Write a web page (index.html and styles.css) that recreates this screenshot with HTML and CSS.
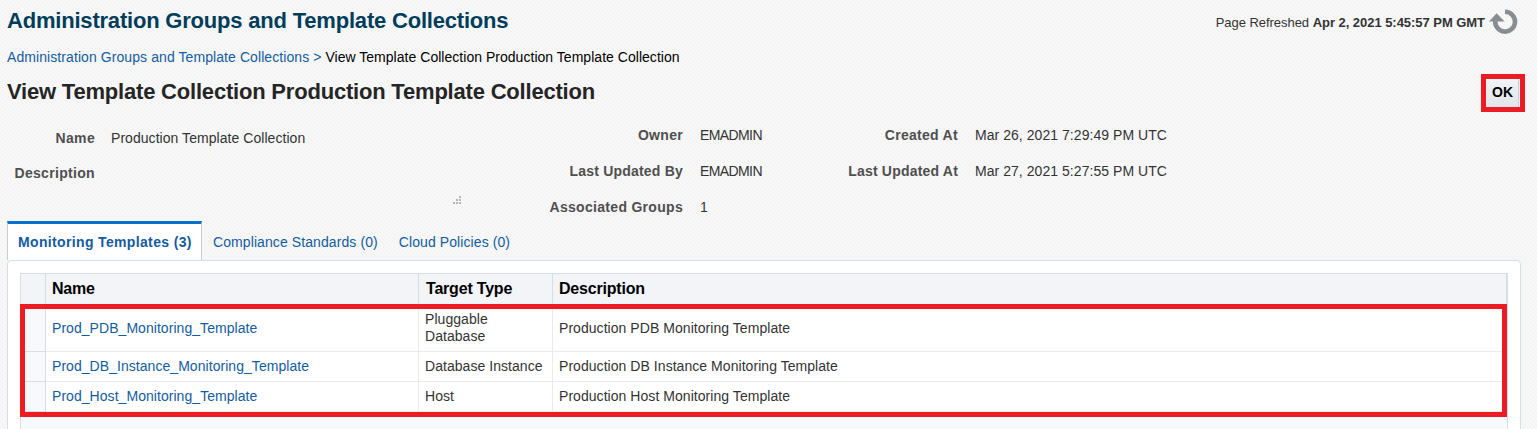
FILE: index.html
```html
<!DOCTYPE html>
<html lang="en">
<head>
<meta charset="utf-8">
<title>Administration Groups and Template Collections</title>
<link rel="stylesheet" href="styles.css">
</head>
<body>
<header class="page-header">
  <h1 class="page-title">Administration Groups and Template Collections</h1>
  <div class="refresh">
    <span class="refresh-text">Page Refreshed <b>Apr 2, 2021 5:45:57 PM GMT</b></span>
    <svg class="refresh-icon" width="30" height="27" viewBox="0 0 30 27">
      <path d="M16 3.8 A9.9 9.9 0 1 1 6.3 12.5" fill="none" stroke="#878d91" stroke-width="4.6"/>
      <path d="M0 13.4 L7.6 5.2 L15.6 13.4 Z" fill="#878d91"/>
    </svg>
  </div>
</header>
<nav class="breadcrumb"><a>Administration Groups and Template Collections</a> <span class="sep">&gt;</span> <span class="current">View Template Collection Production Template Collection</span></nav>
<div class="subheader">
  <h2 class="subtitle">View Template Collection Production Template Collection</h2>
  <button class="ok">OK</button>
</div>
<section class="details">
  <dl class="fields main-fields">
    <dt>Name</dt><dd>Production Template Collection</dd>
    <dt>Description</dt>
    <dd class="description-box"><svg width="8" height="8" viewBox="0 0 8 8" fill="#b5b5b5"><path d="M6 0h2v2H6zM3 3h2v2H3zM6 3h2v2H6zM0 6h2v2H0zM3 6h2v2H3zM6 6h2v2H6z"/></svg></dd>
  </dl>
  <dl class="fields owner-fields">
    <dt class="wide">Owner</dt><dd class="user">EMADMIN</dd>
    <dt>Last Updated By</dt><dd class="user">EMADMIN</dd>
    <dt class="wide">Associated Groups</dt><dd>1</dd>
  </dl>
  <dl class="fields date-fields">
    <dt class="wide">Created At</dt><dd>Mar 26, 2021 7:29:49 PM UTC</dd>
    <dt>Last Updated At</dt><dd>Mar 27, 2021 5:27:55 PM UTC</dd>
  </dl>
</section>
<div class="tabs">
  <a class="tab active">Monitoring Templates (3)</a>
  <a class="tab">Compliance Standards (0)</a>
  <a class="tab">Cloud Policies (0)</a>
</div>
<main class="panel">
  <div class="grid">
    <div class="row head"><span class="handle"></span><span class="cell">Name</span><span class="cell">Target Type</span><span class="cell">Description</span></div>
    <div class="row tall"><span class="handle"></span><span class="cell link">Prod_PDB_Monitoring_Template</span><span class="cell">Pluggable Database</span><span class="cell">Production PDB Monitoring Template</span></div>
    <div class="row"><span class="handle"></span><span class="cell link">Prod_DB_Instance_Monitoring_Template</span><span class="cell">Database Instance</span><span class="cell">Production DB Instance Monitoring Template</span></div>
    <div class="row"><span class="handle"></span><span class="cell link">Prod_Host_Monitoring_Template</span><span class="cell">Host</span><span class="cell">Production Host Monitoring Template</span></div>
    <div class="highlight"></div>
  </div>
</main>
</body>
</html>
```
FILE: styles.css
```css
* { box-sizing: border-box; }
body {
  margin: 0;
  height: 429px;
  overflow: hidden;
  font: 14px/18px "Liberation Sans", Arial, sans-serif;
  letter-spacing: 0.05px;
  color: #333;
  background: #f7f7f7 linear-gradient(45deg, #f9f9f9 25%, #f3f3f3 25% 50%, #f9f9f9 50% 75%, #f3f3f3 75%) 0 0 / 4px 4px;
}
h1, h2, dl, dd { margin: 0; }
.page-header {
  display: flex;
  justify-content: space-between;
  height: 44px;
  padding: 8px 18px 0 7px;
}
.page-title { font-size: 22px; line-height: 25px; letter-spacing: -0.2px; color: #003d5b; }
.refresh { display: flex; font-size: 13px; line-height: 28px; letter-spacing: -0.04px; }
.refresh-text { padding-top: 1px; }
.refresh-icon { margin-left: 4px; }
.breadcrumb { height: 30px; padding: 4px 7px 0; color: #000; }
.breadcrumb a, .sep { color: #145c9e; }
.breadcrumb a { letter-spacing: 0.08px; }
.current { letter-spacing: 0.03px; }
.subheader {
  display: flex;
  justify-content: space-between;
  height: 48px;
  padding: 0 12px 0 7px;
}
.subtitle { font-size: 22px; line-height: 25px; letter-spacing: -0.2px; padding-top: 5px; color: #252525; }
.ok {
  width: 44px;
  height: 38px;
  border: 5px solid #ed1c24;
  border-radius: 0;
  padding: 0 1px 2px 0;
  background: linear-gradient(#f1f3f5, #e1e5e9);
  box-shadow: inset -1px 0 #f5f5f5, inset -2px 0 #c9d1d8;
  font: bold 14px "Liberation Sans", Arial, sans-serif;
  color: #000;
}
.details { display: flex; height: 99px; padding-top: 4px; }
.fields { display: grid; column-gap: 17px; align-content: start; }
.fields dt { text-align: right; font-weight: bold; letter-spacing: 0.2px; color: #4f4f4f; }
.main-fields { grid-template: 35px 40px / 95px 350px; column-gap: 16px; width: 462px; padding-top: 3px; }
.main-fields dt { letter-spacing: 0.32px; }
.description-box { display: flex; justify-content: flex-end; align-items: flex-end; }
.owner-fields { grid-template-columns: 221px 100px; grid-auto-rows: 36px; width: 338px; }
.fields .wide { letter-spacing: 0.3px; }
.user { letter-spacing: -0.6px; }
.date-fields { grid-template-columns: 158px 220px; grid-auto-rows: 36px; }
.tabs { display: flex; height: 39px; padding-left: 7px; }
.tab { padding: 12px 10px 0 11px; letter-spacing: 0.09px; color: #145c9e; }
.tab.active {
  width: 195px;
  padding: 9px 0 0 10px;
  border: 1px solid #c8cdd2;
  border-top: 3px solid #0572ce;
  border-bottom: 0;
  background: #fff;
  font-weight: bold;
  letter-spacing: 0.35px;
}
.panel {
  width: 1514px;
  height: 190px;
  margin-left: 7px;
  padding: 12px 12px 0;
  border: 1px solid #d6dfe6;
  border-radius: 4px;
  background: #fff;
}
.grid {
  position: relative;
  height: 170px;
  border: 1px solid #d6dfe6;
  background: #f8f9fd;
}
.row {
  display: grid;
  grid-template-columns: 25px 373px 134px 1fr;
  height: 30px;
  line-height: 17px;
  background: #fff;
}
.row.head { height: 31px; background: #f2f4f8; font-size: 16px; font-weight: bold; letter-spacing: -0.2px; color: #000; }
.row.tall { height: 47px; }
.handle { background: #f8f9fd; border-right: 1px solid #d6dfe6; border-bottom: 1px solid #d6dfe6; }
.head .handle { background: #f2f4f8; }
.cell {
  display: flex;
  align-items: center;
  padding: 0 6px;
  border-right: 1px solid #ebebeb;
  border-bottom: 1px solid #ebebeb;
}
.row:not(.tall) .cell { padding-bottom: 1px; }
.head .cell { border-color: #d6dfe6; }
.row.head .cell { padding-bottom: 2px; }
.head .cell:nth-child(3) { padding-left: 7px; }
.link { color: #145c9e; }
.highlight {
  position: absolute;
  top: 30px;
  left: -1px;
  width: 1487px;
  height: 113px;
  border: 5px solid #ed1c24;
}
```
